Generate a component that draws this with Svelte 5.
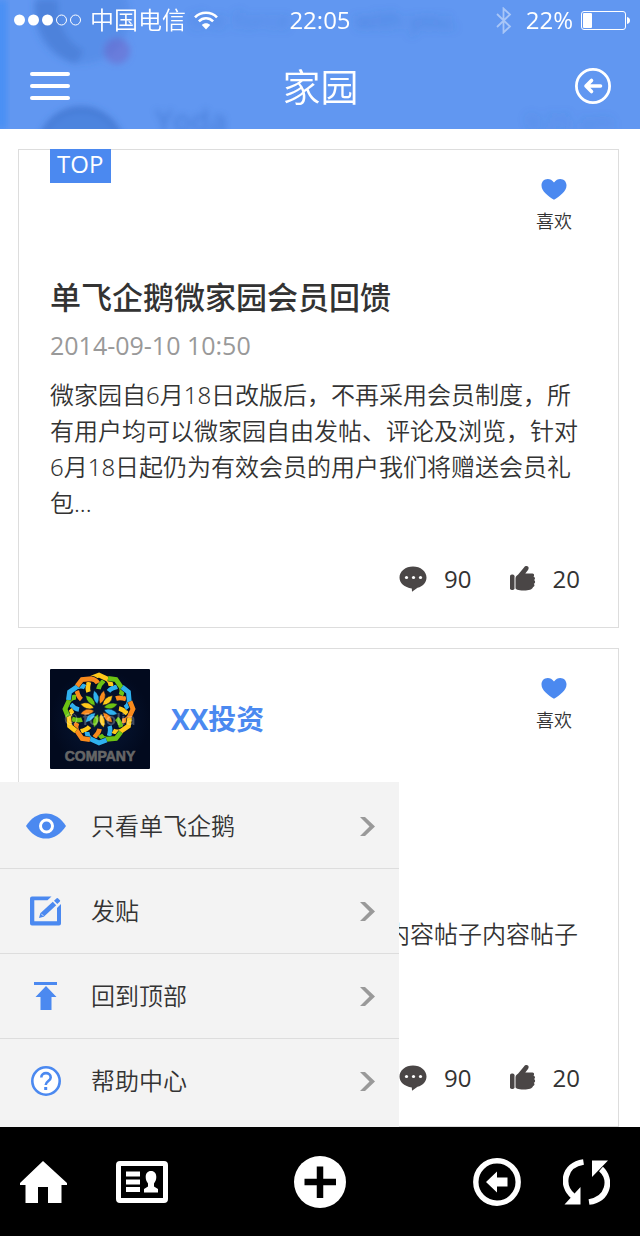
<script>
  const spokes = Array.from({ length: 12 }, (_, i) => i);
  const ribbon = ['#ffc91a', '#6cc313', '#2fb1ee', '#f98a1c'];
  const petal = ['#f98a1c', '#ffc91a', '#6cc313', '#2fb1ee'];

  const menu = [
    { icon: 'eye', label: '只看单飞企鹅' },
    { icon: 'edit', label: '发贴' },
    { icon: 'top', label: '回到顶部' },
    { icon: 'help', label: '帮助中心' }
  ];
</script>

{#snippet like()}
  <button class="like">
    <svg width="26" height="21" viewBox="0 0 26 21" aria-hidden="true">
      <path d="M13 3.6C11.2 1.100 9 0 6.800 0 3 0 .5 2.800 .5 6.400c0 6.200 7 10.600 12.500 14.400C18.500 17 25.500 12.600 25.500 6.400 25.500 2.800 23 0 19.200 0 17 0 14.800 1.100 13 3.600z" fill="#4b89f0" />
    </svg>
    <span>喜欢</span>
  </button>
{/snippet}

{#snippet actions()}
  <div class="actions">
    <button class="count" aria-label="评论 90">
      <svg width="28" height="26" viewBox="0 0 28 26" aria-hidden="true">
        <path d="M14 .5C6.500 .5 .5 5.300 .5 11.500c0 5.500 5 10 12.300 10.900L13 25.800l5.500-4C24 20.500 27.500 16.500 27.500 11.500 27.500 5.300 21.500 .5 14 .5z" fill="#4a4646" />
        <g fill="#fff"><circle cx="7.500" cy="11.500" r="1.600" /><circle cx="14.500" cy="11.500" r="1.600" /><circle cx="21.500" cy="11.500" r="1.600" /></g>
      </svg>
      <span>90</span>
    </button>
    <button class="count" aria-label="赞 20">
      <svg width="26" height="26" viewBox="0 0 26 26" aria-hidden="true">
        <g fill="#4a4646">
          <rect x="0" y="8.500" width="4.500" height="15.500" rx="1.800" />
          <path d="M5.500 12.200C5.500 10.500 7 9.500 8.200 8.600L14 1.500C15 0 17 -.4 18 .6c1 1 .7 2.300 0 3.400l-2.700 3.600h7.200c1.800 0 2 2.200.9 3 1.500.5 2.400 2.700.5 3.500 1.400.7 1.800 3-.1 3.600 1 1 1 3-.8 3.300C23 23.400 18 24.600 14.500 24.600c-3.800 0-9-.6-9-2.600z" />
        </g>
      </svg>
      <span>20</span>
    </button>
  </div>
{/snippet}

<div class="screen">
  <header>
    <svg class="backdrop" width="640" height="129" viewBox="0 0 640 129" aria-hidden="true">
      <defs>
        <filter id="soft" x="-20%" y="-20%" width="140%" height="140%"><feGaussianBlur stdDeviation="3" /></filter>
        <filter id="softer" x="-20%" y="-40%" width="140%" height="180%"><feGaussianBlur stdDeviation="4" /></filter>
      </defs>
      <rect x="-4" width="11" height="129" fill="#4a90f4" filter="url(#soft)" />
      <g filter="url(#soft)">
        <circle cx="82" cy="16" r="48" fill="#3a70cc" opacity=".22" />
        <path d="M34 0C34 30 50 55 76 64L84 50C66 44 56 20 58 0z" fill="#2f62ba" opacity=".3" />
        <circle cx="81" cy="149" r="43" fill="#3a70cc" opacity=".5" />
        <path d="M39 143A43 43 0 0 1 123 143" fill="none" stroke="#2f62ba" stroke-width="4" opacity=".35" />
        <circle cx="117" cy="51" r="13" fill="#7062c8" opacity=".5" />
      </g>
      <g filter="url(#softer)" fill="#3a70cc" font-family="Open Sans, sans-serif" font-size="24" font-weight="400">
        <text x="190" y="29" opacity=".35">the force</text>
        <text x="355" y="29" opacity=".5">with you.</text>
        <text x="525" y="131" opacity=".3">9:25 am</text>
      </g>
      <text x="155" y="132" fill="#3a70cc" font-family="Open Sans, sans-serif" font-size="30" font-weight="600" opacity=".5" filter="url(#soft)">Yoda</text>
    </svg>

    <div class="status">
      <div class="carrier">
        <svg width="68" height="12" viewBox="0 0 68 12" aria-hidden="true">
          <g fill="#fff"><circle cx="5.500" cy="6" r="5.500" /><circle cx="19.500" cy="6" r="5.500" /><circle cx="33.500" cy="6" r="5.500" /></g>
          <g fill="none" stroke="#fff"><circle cx="47.500" cy="6" r="5" /><circle cx="61.500" cy="6" r="5" /></g>
        </svg>
        <span>中国电信</span>
        <svg width="24" height="19" viewBox="0 0 24 19" aria-hidden="true">
          <g fill="none" stroke="#fff" stroke-width="2.600">
            <path d="M1 6.300C7 .2 17 .2 23 6.300" /><path d="M4.900 10.300c4-4 10.200-4 14.200 0" />
          </g>
          <path d="M12 18.500L7.800 14c2.200-2.300 6.200-2.300 8.400 0z" fill="#fff" />
        </svg>
      </div>
      <time>22:05</time>
      <div class="power">
        <svg width="16" height="27" viewBox="0 0 16 27" aria-hidden="true">
          <path d="M1 7l13 12.500-6.500 6V1.500L14 7.500 1 20" fill="none" stroke="#fff" stroke-width="1.800" opacity=".45" />
        </svg>
        <span>22%</span>
        <svg width="49" height="19" viewBox="0 0 49 19" aria-hidden="true">
          <rect x=".5" y=".5" width="44" height="18" rx="2.500" fill="none" stroke="#fff" />
          <rect x="2" y="2" width="9" height="15" rx="1" fill="#fff" />
          <path d="M46 6c4 .5 4 6.500 0 7z" fill="#fff" />
        </svg>
      </div>
    </div>

    <nav class="bar" aria-label="页面">
      <button aria-label="菜单">
        <svg width="40" height="28" viewBox="0 0 40 28" fill="#fff" aria-hidden="true">
          <rect width="40" height="4" rx="2" /><rect y="12" width="40" height="4" rx="2" /><rect y="24" width="40" height="4" rx="2" />
        </svg>
      </button>
      <h1>家园</h1>
      <button class="back" aria-label="返回">
        <svg width="36" height="36" viewBox="0 0 36 36" fill="none" stroke="#fff" aria-hidden="true">
          <circle cx="18" cy="18" r="16.600" stroke-width="2.800" />
          <path d="M25.500 18H11M16.500 12.500L11 18l5.500 5.500" stroke-width="3.600" stroke-linecap="round" stroke-linejoin="round" />
        </svg>
      </button>
    </nav>
  </header>

  <main>
    <article class="post">
      <div class="head">
        <span class="badge">TOP</span>
        {@render like()}
      </div>
      <h2>单飞企鹅微家园会员回馈</h2>
      <time class="date">2014-09-10 10:50</time>
      <p>微家园自6月18日改版后，不再采用会员制度，所有用户均可以微家园自由发帖、评论及浏览，针对6月18日起仍为有效会员的用户我们将赠送会员礼包...</p>
      {@render actions()}
    </article>

    <article class="post company">
      <div class="head">
        <div class="author">
          <svg width="100" height="100" viewBox="0 0 100 100" role="img" aria-label="COMPANY">
            <defs>
              <radialGradient id="night"><stop offset="0" stop-color="#07193a" /><stop offset="1" stop-color="#020a1e" /></radialGradient>
            </defs>
            <rect width="100" height="100" rx="1" fill="url(#night)" />
            <g transform="translate(49 40)" fill="none">
              {#each spokes as i}
                <g transform="rotate({i * 30})">
                  <path d="M-10.500 -17Q-12 -21 -10 -27" stroke="#030d24" stroke-width="5.800" />
                  <path d="M-10.500 -17Q-12 -21 -10 -27" stroke={ribbon[i % 4]} stroke-width="4.600" />
                </g>
              {/each}
              {#each spokes as i}
                <g transform="rotate({i * 30})">
                  <path d="M-7.500 -31L0 -34L8.500 -30Q12 -27 12 -23" stroke="#030d24" stroke-width="6" />
                  <path d="M-7.500 -31L0 -34L8.500 -30Q12 -27 12 -23" stroke={ribbon[i % 4]} stroke-width="4.800" />
                </g>
              {/each}
              {#each spokes as i}
                <path transform="rotate({i * 30})" d="M1 -5Q-2 -13 5 -18.500Q9 -10 1 -5z" fill={petal[i % 4]} stroke="#030d24" stroke-width=".5" />
              {/each}
            </g>
            <text x="14" y="56" fill="#fff" opacity=".25" font-family="Open Sans, sans-serif" font-size="17" font-weight="600">© fotolia</text>
            <text x="50" y="92" text-anchor="middle" fill="#666" stroke="#666" stroke-width=".6" font-family="Liberation Sans, sans-serif" font-size="14" font-weight="700">COMPANY</text>
          </svg>
          <h3>XX投资</h3>
        </div>
        {@render like()}
      </div>
      <p>帖子内容帖子内容帖子内容帖子内容帖子内容帖子</p>
      {@render actions()}
    </article>
  </main>

  <footer>
    <ul class="menu">
      {#each menu as item}
        <li>
          <button>
            <span class="glyph">
              {#if item.icon === 'eye'}
                <svg width="40" height="26" viewBox="0 0 40 26" aria-hidden="true">
                  <path d="M0 13C5 5 12 .4 20 .4S35 5 40 13C35 21 28 25.600 20 25.600S5 21 0 13z" fill="#4b89f0" />
                  <circle cx="20.500" cy="13" r="6" fill="#4b89f0" stroke="#fff" stroke-width="3" />
                </svg>
              {:else if item.icon === 'edit'}
                <svg width="32" height="30" viewBox="0 0 32 30" aria-hidden="true">
                  <path d="M21.500 .5L17.500 4.300H4.300V25.300H27V12L31 8V27.500Q31 29.500 29 29.500H2Q0 29.500 0 27.500V2.500Q0 .5 2 .5z" fill="#4b89f0" />
                  <path d="M9 22l1.300-4.700L22.800 5.800l3.400 3.500L13.800 20.800zM24 4.800l2.700-2.600q.6-.5 1.200 0l2 2.100q.6.6 0 1.200L27.300 8z" fill="#4b89f0" />
                  <path d="M11.300 17.800l2.200 2.200" stroke="#f3f3f3" stroke-width=".8" />
                </svg>
              {:else if item.icon === 'top'}
                <svg width="24" height="28" viewBox="0 0 24 28" aria-hidden="true">
                  <path d="M0 0H23V3H0zM12 4L22.500 15H17.500V28H6.500V15H1.500z" fill="#4b89f0" />
                </svg>
              {:else}
                <svg width="30" height="30" viewBox="0 0 30 30" aria-hidden="true">
                  <circle cx="15" cy="15" r="13.700" fill="#fff" stroke="#4b89f0" stroke-width="2.600" />
                  <path d="M10.300 11.500C10.300 5.700 19.700 5.700 19.700 11.500c0 3.500-5 3.500-5 7.500" fill="none" stroke="#4b89f0" stroke-width="2.600" />
                  <rect x="13.200" y="21" width="3" height="3" fill="#4b89f0" />
                </svg>
              {/if}
            </span>
            <span class="label">{item.label}</span>
            <svg width="15" height="19" viewBox="0 0 15 19" aria-hidden="true">
              <path d="M0 0H5L15 9.500 5 19H0L9.500 9.500z" fill="#999" />
            </svg>
          </button>
        </li>
      {/each}
    </ul>

    <nav class="tabs" aria-label="工具栏">
      <div class="left">
        <a href="#home" aria-label="首页">
          <svg width="47" height="42" viewBox="0 0 47 42" aria-hidden="true">
            <path d="M23 0L47 22V24H41.500V42H28V26H18V42H5.500V24H0V22z" fill="#fff" />
          </svg>
        </a>
        <a href="#profile" aria-label="名片">
          <svg width="52" height="42" viewBox="0 0 52 42" aria-hidden="true">
            <rect x="2.500" y="2.500" width="47" height="37" rx="1.500" fill="none" stroke="#fff" stroke-width="5" />
            <path d="M10 10.500H24V15.500H10zM10 18.500H24V23.500H10zM10 26H24V31H10zM35 10c3.500 0 5.300 2.500 5.300 6 0 3-1 4.500-2.300 6.500v3l4 2.500v3.500H28V28l4-2.500v-3c-1.300-2-2.300-3.500-2.300-6.500 0-3.500 1.800-6 5.300-6z" fill="#fff" />
          </svg>
        </a>
      </div>
      <a href="#new" aria-label="新建">
        <svg width="52" height="52" viewBox="0 0 52 52" aria-hidden="true">
          <circle cx="26" cy="26" r="26" fill="#fff" />
          <path d="M26 10.500V42M10.500 26H42" stroke="#000" stroke-width="6.500" />
        </svg>
      </a>
      <div class="right">
        <a href="#back" aria-label="后退">
          <svg width="48" height="48" viewBox="0 0 48 48" aria-hidden="true">
            <circle cx="24" cy="24" r="21.200" fill="none" stroke="#fff" stroke-width="5.400" />
            <path d="M13 24L24 13.500V19.500H34.500V28.500H24V34.500z" fill="#fff" />
          </svg>
        </a>
        <a href="#refresh" aria-label="刷新">
          <svg width="47" height="46" viewBox="0 0 47 46" aria-hidden="true">
            <path d="M20.500 3C0 6 -2 27 10 37M26 43C46 40 49 20 38 10" fill="none" stroke="#fff" stroke-width="5.800" />
            <path d="M17.500 28V45.500H1.500zM29 1.500H45L29 18z" fill="#fff" />
          </svg>
        </a>
      </div>
    </nav>
  </footer>
</div>

<style>
  :global(body) {
    margin: 0;
    background: #fff;
  }
  .screen {
    min-height: 100vh;
    display: flex;
    flex-direction: column;
    font-family: 'Noto Sans', 'Noto Sans CJK SC', sans-serif;
    font-size: 24px;
    line-height: 36px;
    font-weight: 350;
    color: #333;
  }
  svg {
    display: block;
    flex: none;
  }
  button {
    margin: 0;
    padding: 0;
    border: 0;
    background: none;
    font: inherit;
    color: inherit;
    cursor: pointer;
  }
  h1,
  h2,
  h3,
  p,
  ul {
    margin: 0;
    padding: 0;
  }
  header {
    position: relative;
    overflow: hidden;
    background: #6197f1;
    color: #fff;
  }
  .backdrop {
    position: absolute;
    top: 0;
    left: 0;
  }
  .status {
    position: relative;
    display: grid;
    grid-template-columns: 1fr auto 1fr;
    align-items: center;
    height: 40px;
    padding: 0 10px;
  }
  .carrier,
  .power {
    display: flex;
    align-items: center;
    gap: 8px;
  }
  .carrier {
    margin-left: 4px;
  }
  .power {
    justify-content: flex-end;
  }
  .power span {
    margin-left: 6px;
  }
  .status > time,
  .power,
  .badge,
  .date,
  .count {
    font-family: 'Open Sans', sans-serif;
    font-weight: 400;
  }
  .bar {
    position: relative;
    display: grid;
    grid-template-columns: 1fr auto 1fr;
    align-items: center;
    height: 86px;
    padding: 3px 29px 0 30px;
  }
  .bar button {
    justify-self: start;
  }
  .bar .back {
    justify-self: end;
  }
  h1 {
    font-size: 38px;
    line-height: 56px;
    font-weight: 350;
  }
  main {
    flex: 1;
    display: flex;
    flex-direction: column;
    gap: 20px;
    padding: 20px 21px 0 18px;
  }
  .post {
    display: flex;
    flex-direction: column;
    border: 1px solid #ddd;
    padding: 0 38px 30px 31px;
  }
  .head {
    display: flex;
    justify-content: space-between;
    align-items: flex-start;
    min-height: 127px;
  }
  .badge {
    margin-top: -1px;
    padding: 0 8px 4px 7px;
    background: #4b89f0;
    color: #fff;
    line-height: 30px;
  }
  .like {
    display: flex;
    flex-direction: column;
    align-items: center;
    gap: 8px;
    margin: 29px 8px 0 0;
    font-size: 18px;
    line-height: 26px;
  }
  h2 {
    font-size: 31px;
    line-height: 40px;
    font-weight: 500;
  }
  .date {
    margin-top: 10px;
    font-size: 25px;
    color: #999;
  }
  p {
    margin-top: 14px;
  }
  .actions {
    display: flex;
    justify-content: flex-end;
    gap: 38px;
    margin-top: 40px;
  }
  .count {
    display: flex;
    align-items: center;
    gap: 17px;
  }
  .author {
    display: flex;
    align-items: center;
    gap: 21px;
    margin-top: 20px;
  }
  h3 {
    font-family: 'Open Sans', 'Noto Sans CJK SC', sans-serif;
    font-size: 28px;
    line-height: 36px;
    font-weight: 700;
    color: #4b89f0;
  }
  .company p {
    margin: 140px 0 68px;
  }
  footer {
    position: sticky;
    bottom: 0;
    background: #000;
  }
  .menu {
    position: absolute;
    left: 0;
    bottom: 100%;
    width: min(399px, 80%);
    padding: 2px 0 4px;
    background: #f3f3f3;
    list-style: none;
  }
  .menu li + li {
    border-top: 1px solid #ddd;
  }
  .menu button {
    display: flex;
    align-items: center;
    width: 100%;
    height: 84px;
    padding: 0 24px 0 20px;
  }
  .glyph {
    display: flex;
    justify-content: center;
    width: 51px;
  }
  .label {
    flex: 1;
    margin-left: 20px;
    text-align: left;
  }
  .tabs {
    display: grid;
    grid-template-columns: 1fr auto 1fr;
    align-items: center;
    height: 109px;
    padding: 0 20px;
  }
  .left,
  .right {
    display: flex;
    align-items: center;
    gap: 49px;
  }
  .right {
    justify-content: flex-end;
    gap: 42px;
    margin-right: 10px;
  }
</style>
